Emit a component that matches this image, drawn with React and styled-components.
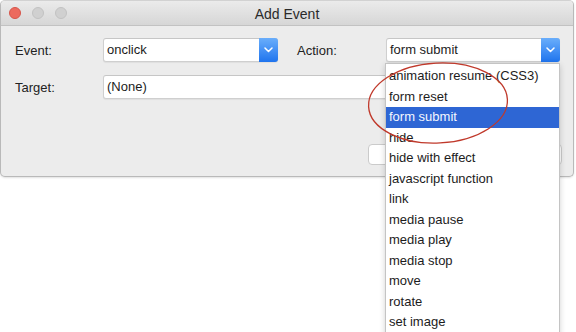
import React from 'react';
import styled, { createGlobalStyle } from 'styled-components';

const GlobalStyle = createGlobalStyle`
  html, body {
    margin: 0;
    padding: 0;
    background: #ffffff;
    font-family: 'Liberation Sans', Arial, sans-serif;
    overflow: hidden;
  }
`;

const Page = styled.div`
  width: 576px;
  height: 332px;
  position: relative;
  overflow: hidden;
`;

const Window = styled.div`
  width: 574px;
  height: 177px;
  box-sizing: border-box;
  border: 1px solid #b9b9b9;
  border-top-color: #d2d2d2;
  border-radius: 5px;
  background: #ececec;
  box-shadow: 0 1px 2px rgba(0, 0, 0, 0.12);
  display: flex;
  flex-direction: column;
`;

const TitleBar = styled.div`
  height: 24px;
  flex: none;
  display: grid;
  grid-template-columns: 1fr auto 1fr;
  align-items: center;
  padding: 0 8px;
  background: linear-gradient(#ebebeb, #d6d6d6);
  border-bottom: 1px solid #c2c2c2;
  border-radius: 4px 4px 0 0;
`;

const Lights = styled.div`
  display: flex;
  gap: 11px;
`;

const Light = styled.span`
  width: 12px;
  height: 12px;
  border-radius: 50%;
  box-sizing: border-box;
  background: ${p => (p.$close ? '#ec6a5e' : '#d0d0d0')};
  border: 1px solid ${p => (p.$close ? '#d6554a' : '#c2c2c2')};
`;

const Title = styled.div`
  font-size: 14px;
  color: #2a2a2a;
  padding-top: 1px;
`;

const Body = styled.div`
  flex: 1;
  padding: 12px 14px 0 14px;
  display: flex;
  flex-direction: column;
`;

const Form = styled.div`
  display: grid;
  grid-template-columns: 88px 175px 19px 89px 174px;
  grid-template-rows: 24px 24px;
  row-gap: 13px;
  align-items: center;
`;

const Label = styled.div`
  font-size: 13px;
  color: #222;
  grid-column: ${p => p.$col};
`;

const Select = styled.div`
  position: relative;
  height: 24px;
  box-sizing: border-box;
  grid-column: ${p => p.$span || 'auto'};
  display: flex;
  align-items: stretch;
  background: #fff;
  border: 1px solid #cfcfcf;
  border-top-color: #c6c6c6;
  border-radius: 3px;
  box-shadow: 0 1px 1px rgba(0, 0, 0, 0.06);
`;

const Value = styled.div`
  flex: 1;
  font-size: 13px;
  color: #1c1c1c;
  padding-left: 3px;
  line-height: 22px;
`;

const Arrow = styled.div`
  width: 19px;
  margin: -1px -1px -1px 0;
  border-radius: 0 3px 3px 0;
  background: linear-gradient(#6aaefb, #1f74ee);
  display: flex;
  align-items: center;
  justify-content: center;
`;

const Buttons = styled.div`
  margin-top: 45px;
  display: flex;
  justify-content: flex-end;
  gap: 12px;
  margin-right: -3px;
`;

const Button = styled.div`
  width: 91px;
  height: 21px;
  box-sizing: border-box;
  background: #fff;
  border: 1px solid #cbcbcb;
  border-radius: 4px;
`;

const Menu = styled.div`
  position: absolute;
  left: -2px;
  top: 24px;
  width: 175px;
  background: #fff;
  border: 1px solid #c4c4c4;
  box-sizing: border-box;
  padding: 2px 0 20px;
  box-shadow: 0 2px 6px rgba(0, 0, 0, 0.18);
  z-index: 5;
`;

const Item = styled.div`
  height: 20.5px;
  line-height: 20.5px;
  font-size: 13px;
  padding-left: 3px;
  white-space: nowrap;
  color: ${p => (p.$active ? '#f4f7ff' : '#1c1c1c')};
  background: ${p => (p.$active ? '#2e66d4' : 'transparent')};
`;

const Annotation = styled.svg`
  position: absolute;
  left: 360px;
  top: 56px;
  pointer-events: none;
  z-index: 10;
`;

const Chevron = () => (
  <svg width="9" height="6" viewBox="0 0 9 6">
    <path d="M1 1 L4.5 4.5 L8 1" fill="none" stroke="#fff" strokeWidth="1.5" strokeLinecap="round" strokeLinejoin="round" />
  </svg>
);

const actions = [
  'animation resume (CSS3)',
  'form reset',
  'form submit',
  'hide',
  'hide with effect',
  'javascript function',
  'link',
  'media pause',
  'media play',
  'media stop',
  'move',
  'rotate',
  'set image',
];

const App = () => (
  <Page>
    <GlobalStyle />
    <Window>
      <TitleBar>
        <Lights>
          <Light $close />
          <Light />
          <Light />
        </Lights>
        <Title>Add Event</Title>
        <div />
      </TitleBar>
      <Body>
        <Form>
          <Label $col="1">Event:</Label>
          <Select>
            <Value>onclick</Value>
            <Arrow><Chevron /></Arrow>
          </Select>
          <Label $col="4">Action:</Label>
          <Select>
            <Value>form submit</Value>
            <Arrow><Chevron /></Arrow>
            <Menu>
              {actions.map(a => (
                <Item key={a} $active={a === 'form submit'}>{a}</Item>
              ))}
            </Menu>
          </Select>
          <Label $col="1">Target:</Label>
          <Select $span="2 / 6">
            <Value>(None)</Value>
            <Arrow><Chevron /></Arrow>
          </Select>
        </Form>
        <Buttons>
          <Button />
          <Button />
        </Buttons>
      </Body>
    </Window>
    <Annotation width="160" height="96" viewBox="0 0 160 96">
      <ellipse cx="78" cy="47" rx="69.5" ry="40" fill="none" stroke="#c0392b" strokeWidth="1.3" transform="rotate(-3 78 47)" />
    </Annotation>
  </Page>
);

export default App;
